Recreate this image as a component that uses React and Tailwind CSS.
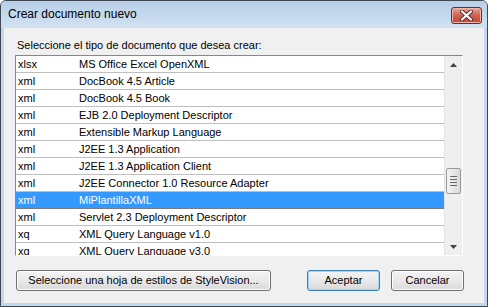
import React from 'react';

const rows = [
  ['xlsx', 'MS Office Excel OpenXML'],
  ['xml', 'DocBook 4.5 Article'],
  ['xml', 'DocBook 4.5 Book'],
  ['xml', 'EJB 2.0 Deployment Descriptor'],
  ['xml', 'Extensible Markup Language'],
  ['xml', 'J2EE 1.3 Application'],
  ['xml', 'J2EE 1.3 Application Client'],
  ['xml', 'J2EE Connector 1.0 Resource Adapter'],
  ['xml', 'MiPlantillaXML', true],
  ['xml', 'Servlet 2.3 Deployment Descriptor'],
  ['xq', 'XML Query Language v1.0'],
  ['xq', 'XML Query Language v3.0'],
];

const font = { fontFamily: '"Liberation Sans", Arial, sans-serif' };

const Button = ({ children, width, isDefault }) => (
  <div
    className={`h-[21px] ${width} rounded-[3px] border flex items-center justify-center text-[11px] text-black bg-gradient-to-b from-[#f4f4f4] via-[#e9e9e9] to-[#d9d9d9] ${
      isDefault ? 'border-[#3c7fb1] shadow-[inset_0_0_0_1px_#9fd8f5]' : 'border-[#707070] shadow-[inset_0_0_0_1px_#fcfcfc]'
    }`}
  >
    {children}
  </div>
);

export default function App() {
  return (
    <div className="w-[488px] h-[307px] bg-white" style={font}>
      <div className="w-full h-full flex flex-col rounded-t-[6px] border border-[#3f4752] bg-[#c3d7ec]">
        {/* title bar */}
        <div className="h-[27px] flex items-start justify-between rounded-t-[5px] bg-gradient-to-b from-[#b7cfe8] to-[#d2e2f2]">
          <span className="pl-[7px] pt-[6px] text-[12px] leading-[15px] text-black">Crear documento nuevo</span>
          <div className="mt-[6px] mr-[5px] w-[31px] h-[17px] rounded-[3px] border border-[#6b2b26] bg-gradient-to-b from-[#e7a898] via-[#d0614f] to-[#c44532] flex items-center justify-center shadow-[inset_0_0_0_1px_#f1b6a8]">
            <svg width="13" height="11" viewBox="0 0 13 11">
              <path d="M2 1.5 L11 9.5 M11 1.5 L2 9.5" stroke="#5a2a24" strokeWidth="4" strokeLinecap="round" />
              <path d="M2 1.5 L11 9.5 M11 1.5 L2 9.5" stroke="#ffffff" strokeWidth="2.2" strokeLinecap="round" />
            </svg>
          </div>
        </div>

        {/* dialog body */}
        <div className="flex-1 mx-[3px] mb-[3px] bg-[#f0f0f0] flex flex-col pl-[11px]">
          <div className="mt-[11px] pl-[2px] text-[11px] leading-[13px] text-black">
            Seleccione el tipo de documento que desea crear:
          </div>

          <div className="mt-[3px] w-[448px] h-[201px] border-t border-l border-[#828790] border-b border-r border-b-white border-r-white flex">
            <div className="flex-1 bg-white overflow-hidden">
              {rows.map(([ext, name, sel], i) => (
                <div
                  key={i}
                  className={`h-[17px] flex items-center border-b text-[11px] ${
                    sel ? 'bg-[#3399ff] text-white border-[#7c7c7c]' : 'text-black border-[#bfbfbf]'
                  } ${rows[i + 1] && rows[i + 1][2] ? 'border-[#7c7c7c]' : ''}`}
                >
                  <span className="w-[63px] pl-[2px]">{ext}</span>
                  <span>{name}</span>
                </div>
              ))}
            </div>
            {/* scrollbar */}
            <div className="w-[18px] bg-[#efefef] border-l border-[#e4e4e4] flex flex-col items-center">
              <div className="h-[17px] flex items-center justify-center">
                <svg width="7" height="4" viewBox="0 0 7 4"><path d="M3.5 0 L7 4 L0 4 Z" fill="#404040" /></svg>
              </div>
              <div className="h-[95px]" />
              <div className="w-[15px] h-[26px] rounded-[2px] border border-[#9a9a9a] bg-gradient-to-r from-[#f4f4f4] to-[#dadada] flex flex-col items-center justify-center gap-[2px]">
                <div className="w-[7px] h-px bg-[#6a6a6a]" />
                <div className="w-[7px] h-px bg-[#6a6a6a]" />
                <div className="w-[7px] h-px bg-[#6a6a6a]" />
                <div className="w-[7px] h-px bg-[#6a6a6a]" />
              </div>
              <div className="flex-1" />
              <div className="h-[17px] flex items-center justify-center">
                <svg width="7" height="4" viewBox="0 0 7 4"><path d="M0 0 L7 0 L3.5 4 Z" fill="#404040" /></svg>
              </div>
            </div>
          </div>

          <div className="mt-[14px] flex pl-[1px]">
            <Button width="w-[255px]">Seleccione una hoja de estilos de StyleVision...</Button>
            <div className="ml-[36px]">
              <Button width="w-[73px]" isDefault>Aceptar</Button>
            </div>
            <div className="ml-[11px]">
              <Button width="w-[73px]">Cancelar</Button>
            </div>
          </div>
        </div>
      </div>
    </div>
  );
}
